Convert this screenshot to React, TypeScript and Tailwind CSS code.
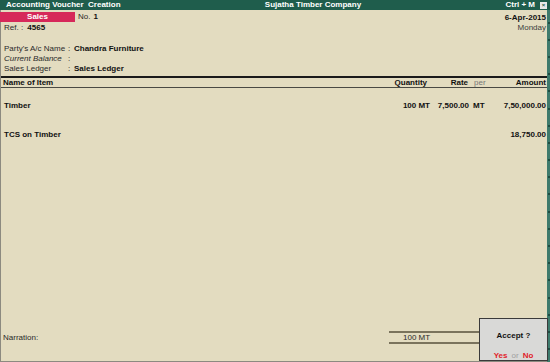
import React from "react";

const FONT = "font-['Liberation_Sans',Arial,sans-serif]";

function TitleBar() {
  return (
    <div className="flex items-center h-[10px] bg-[#1f5d4c] text-white font-bold text-[8px] leading-[10px] px-[6px] relative">
      <span className="whitespace-pre">Accounting Voucher  Creation</span>
      <span className="flex-1 text-center pl-[0px]">Sujatha Timber Company</span>
      <span className="mr-[5px]">Ctrl + M</span>
      <span className="w-[7px] h-[7px] bg-[#e8e8e8] text-[#1f5d4c] flex items-center justify-center text-[6px] leading-none mr-[-3px]">
        ×
      </span>
    </div>
  );
}

function Header() {
  return (
    <div className="flex justify-between">
      <div className="flex flex-col">
        <div className="flex items-center mt-[2px] h-[10px]">
          <div className="w-[75px] h-[10px] bg-[#d6285a] text-white font-bold text-center leading-[10px] ml-[-1px]">
            Sales
          </div>
          <span className="ml-[3px] text-[#2a2a2a]">No.</span>
          <span className="ml-[3px] font-bold">1</span>
        </div>
        <div className="pl-[3px] h-[10px] leading-[10px] mt-[1px]">
          <span className="text-[#2a2a2a]">Ref.&nbsp;:&nbsp;</span>
          <span className="font-bold ml-[2px]">4565</span>
        </div>
        <div className="pl-[3px] mt-[11px] flex flex-col">
          <div className="flex h-[10px] leading-[10px]">
            <span className="w-[64px] text-[#2a2a2a]">Party's A/c Name</span>
            <span className="w-[6px]">:</span>
            <span className="font-bold">Chandra Furniture</span>
          </div>
          <div className="flex h-[10px] leading-[10px]">
            <span className="w-[64px] italic text-[#2a2a2a]">Current Balance</span>
            <span className="w-[6px]">:</span>
          </div>
          <div className="flex h-[9px] leading-[9px]">
            <span className="w-[64px] text-[#2a2a2a]">Sales Ledger</span>
            <span className="w-[6px]">:</span>
            <span className="font-bold">Sales Ledger</span>
          </div>
        </div>
      </div>
      <div className="flex flex-col items-end pr-[1px] mt-[3px]">
        <span className="font-bold h-[10px] leading-[10px]">6-Apr-2015</span>
        <span className="text-[#3c3c3c] h-[10px] leading-[10px]">Monday</span>
      </div>
    </div>
  );
}

function ItemRow({
  name,
  qty,
  rate,
  per,
  amount,
  className = "",
}: {
  name: string;
  qty?: string;
  rate?: string;
  per?: string;
  amount: string;
  className?: string;
}) {
  return (
    <div className={`flex h-[10px] leading-[10px] font-bold ${className}`}>
      <span className="flex-1 pl-[3px]">{name}</span>
      <span className="w-[60px] text-right whitespace-nowrap">{qty}</span>
      <span className="w-[39px] text-right whitespace-nowrap">{rate}</span>
      <span className="w-[30px] pl-[4px]">{per}</span>
      <span className="w-[48px] text-right whitespace-nowrap pr-[1px]">{amount}</span>
    </div>
  );
}

export default function App() {
  return (
    <div className={`relative w-[550px] h-[362px] bg-[#e3dcc0] text-[8px] text-[#111] ${FONT} overflow-hidden`}>
      <TitleBar />
      <div className="flex h-[352px]">
        <div className="flex-1 flex flex-col border-l border-b border-[#8c8a80]">
          <Header />

          {/* column header */}
          <div className="mt-[3px] border-t-2 border-b border-t-[#1a1a1a] border-b-[#4a4a44] flex h-[12px] leading-[9px] font-bold">
            <span className="flex-1 pl-[2px]">Name of Item</span>
            <span className="w-[60px] text-right pr-[3px]">Quantity</span>
            <span className="w-[39px] text-right pr-[1px]">Rate</span>
            <span className="w-[30px] pl-[5px] font-normal text-[#777]">per</span>
            <span className="w-[48px] text-right pr-[1px]">Amount</span>
          </div>

          <ItemRow
            className="mt-[13px]"
            name="Timber"
            qty="100 MT"
            rate="7,500.00"
            per="MT"
            amount="7,50,000.00"
          />
          <ItemRow className="mt-[19px]" name="TCS on Timber" amount="18,750.00" />

          <div className="flex-1" />

          {/* narration */}
          <div className="flex items-center mb-[17px]">
            <span className="pl-[2px] text-[#2a2a2a] flex-1">Narration:</span>
            <div className="w-[90px] h-[13px] border-y-2 border-[#7a735c] leading-[9px] pl-[14px] text-[#2a2a2a]">
              100 MT
            </div>
            <div className="w-[68px]" />
          </div>
        </div>

        {/* right scroll strip */}
        <div className="w-[3px] bg-[#3e7a6c] flex flex-col justify-around items-center py-[4px]">
          {Array.from({ length: 20 }).map((_, i) => (
            <span key={i} className="w-[2px] h-[2px] bg-[#1f4d42]" />
          ))}
        </div>
      </div>

      {/* accept dialog */}
      <div className="absolute left-[479px] top-[318px] w-[69px] h-[43px] bg-[#d9d9d7] border border-[#3a3a3a] flex flex-col items-center">
        <span className="mt-[12px] font-bold text-[8px] leading-[10px]">Accept ?</span>
        <div className="mt-[10px] leading-[10px] flex gap-[4px]">
          <span className="font-bold text-[#e11d2a]">Yes</span>
          <span className="text-[#a0a0a0]">or</span>
          <span className="font-bold text-[#e11d2a]">No</span>
        </div>
      </div>
    </div>
  );
}
